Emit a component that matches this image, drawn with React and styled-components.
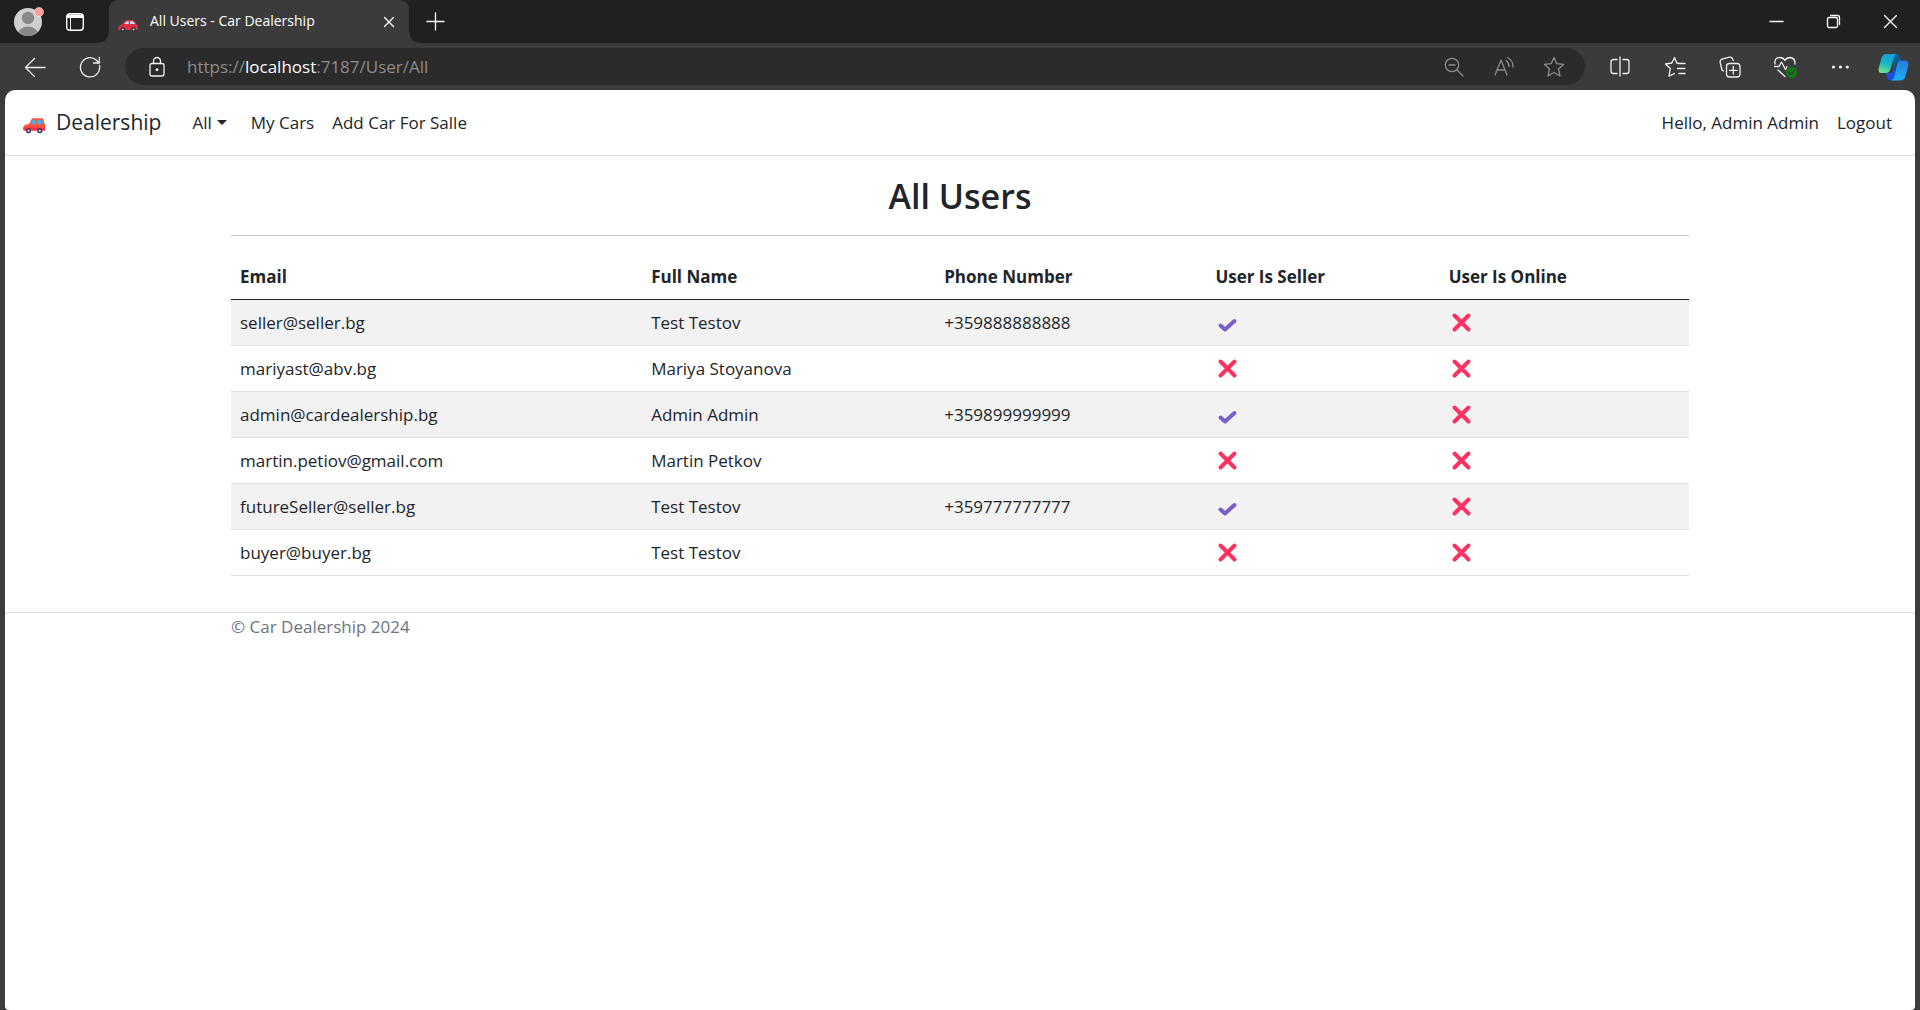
import React from "react";
import styled, { createGlobalStyle, css } from "styled-components";

const GlobalStyle = createGlobalStyle`
  *, *::before, *::after { box-sizing: border-box; }
  body {
    margin: 0;
    background: #3b3b3b;
    font-family: "Open Sans", "Noto Sans", sans-serif;
    font-size: 17px;
    line-height: 27px;
    color: #212529;
  }
  button { font: inherit; color: inherit; background: none; border: 0; padding: 0; }
  a { color: inherit; text-decoration: none; }
`;

/* ---------- Browser frame ---------- */

const Window = styled.div`
  display: flex;
  flex-direction: column;
  min-height: 100vh;
`;

const TitleBar = styled.header`
  display: flex;
  align-items: center;
  height: 43px;
  padding-left: 14px;
  background: #202020;
  color: #fff;
`;

const FrameButton = styled.button`
  display: flex;
  align-items: center;
  justify-content: center;
  flex: none;
  width: ${(p) => p.$width}px;
  height: 100%;
`;

const Tab = styled.div`
  position: relative;
  display: flex;
  align-items: center;
  gap: 12px;
  width: 300px;
  height: 100%;
  padding: 0 8px 0 9px;
  margin-left: 4px;
  border-radius: 9px 9px 0 0;
  background: #3b3b3b;

  &::before,
  &::after {
    content: "";
    position: absolute;
    bottom: 0;
    width: 10px;
    height: 10px;
  }
  &::before {
    right: 100%;
    background: radial-gradient(circle at 0 0, #202020 9px, #3b3b3b 10px);
  }
  &::after {
    left: 100%;
    background: radial-gradient(circle at 100% 0, #202020 9px, #3b3b3b 10px);
  }
`;

const TabTitle = styled.span`
  flex: 1;
  padding-bottom: 2px;
  font-size: 14px;
  line-height: 20px;
  white-space: nowrap;
`;

const WindowControls = styled.div`
  display: flex;
  height: 100%;
  margin-left: auto;
  padding-right: 1px;
`;

const Toolbar = styled.div`
  display: flex;
  align-items: center;
  gap: 1px;
  padding: 5px 0 5px 8px;
  color: #f0f0f0;
`;

const ToolGroup = styled.div`
  display: flex;
  align-items: center;
  height: 37px;
`;

const AddressBar = styled.div`
  display: flex;
  align-items: center;
  flex: 1;
  height: 37px;
  margin: 0 6px 0 7px;
  padding: 0 6px 0 12px;
  border-radius: 19px;
  background: #2b2b2b;
  color: #8c8c8c;
`;

const Url = styled.div`
  flex: 1;
  padding-left: 10px;
  font-size: 17px;
  line-height: 24px;
  white-space: nowrap;
  outline: none;
`;

const Host = styled.span`
  color: #fff;
`;

/* ---------- Site ---------- */

const Page = styled.div`
  flex: 1;
  margin: 0 5px;
  border-radius: 10px 10px 4px 4px;
  background: #fff;
`;

const Navbar = styled.nav`
  display: flex;
  align-items: center;
  height: 66px;
  padding: 0 23px 0 18px;
  border-bottom: 1px solid #dee2e6;
`;

const Brand = styled.a`
  display: flex;
  align-items: center;
  gap: 11px;
  margin-right: 31px;
  font-size: 21px;
`;

const NavList = styled.ul`
  display: flex;
  gap: ${(p) => p.$gap}px;
  margin: 0;
  padding: 0;
  list-style: none;
  ${(p) => p.$end && css`margin-left: auto;`}
`;

const NavItem = styled.li`
  white-space: nowrap;
`;

const Dropdown = styled.button`
  display: flex;
  align-items: center;
  gap: 5px;
  margin-right: 6px;

  &::after {
    content: "";
    border: 5px solid transparent;
    border-top-color: currentColor;
    border-bottom: 0;
  }
`;

const Container = styled.div`
  width: 100%;
  max-width: 1482px;
  margin: 0 auto;
  padding: 0 12px;
`;

const Heading = styled.h1`
  margin: 0;
  padding: 19px 0 17px;
  font-size: 34px;
  line-height: 43px;
  font-weight: 600;
  text-align: center;
`;

const Rule = styled.hr`
  height: 1px;
  margin: 0 0 18px;
  border: 0;
  background: #c7c8c9;
`;

const Table = styled.table`
  width: 100%;
  border-collapse: collapse;
  table-layout: fixed;
  margin-bottom: 36px;
`;

const Column = styled.col`
  width: ${(p) => p.$share}%;
`;

const HeadCell = styled.th`
  height: 45px;
  padding: 0 9px;
  text-align: left;
  font-weight: 700;
  border-bottom: 1px solid #212529;
`;

const Row = styled.tr`
  &:nth-child(odd) { background: #f2f2f2; }
`;

const Cell = styled.td`
  height: 46px;
  padding: 0 9px;
  border-bottom: 1px solid #dee2e6;
`;

const Footer = styled.footer`
  border-top: 1px solid #dee2e6;
  color: #6c757d;
`;

const StatusSvg = styled.svg`
  display: block;
  fill: none;
  stroke: ${(p) => (p.$yes ? "#7b5fc9" : "#ff3162")};
  stroke-width: 4;
  stroke-linecap: round;
  stroke-linejoin: round;
`;

const LineSvg = styled.svg`
  display: block;
  flex: none;
  fill: none;
  stroke: currentColor;
  stroke-width: 1.3;
  stroke-linecap: round;
  stroke-linejoin: round;
`;

/* ---------- Icons ---------- */

const Line = ({ size = 22, children }) => (
  <LineSvg width={size} height={size} viewBox={`0 0 ${size} ${size}`} aria-hidden="true">
    {children}
  </LineSvg>
);

const STAR = "M11 1.6 L13.7 7.6 L20.5 8.4 L15.5 13 L17 20 L11 16.5 L5 20 L6.500 13 L1.5 8.400 L8.300 7.600 Z";

const Avatar = () => (
  <svg width="30" height="30" viewBox="0 0 30 30" aria-hidden="true">
    <clipPath id="face"><circle cx="14" cy="15" r="14" /></clipPath>
    <circle cx="14" cy="15" r="14" fill="#d2d0ce" />
    <g clipPath="url(#face)" fill="#8a8886">
      <circle cx="14" cy="11" r="6.200" />
      <ellipse cx="14" cy="27" rx="10" ry="7.500" />
    </g>
    <circle cx="25" cy="5" r="4.500" fill="#ff9f97" stroke="#fff" strokeOpacity="0.5" />
  </svg>
);

const RedCar = () => (
  <svg width="20" height="20" viewBox="0 -3 20 20" aria-hidden="true">
    <path d="M0.500 12.500 Q1 10 4 9.300 L7 5.800 Q8 5 10 5 H14 Q16 5 17 6.500 L18.500 9 Q20 10 20 12 V14 Q20 15 19 15 H1.500 Q0 15 0 14 Z" fill="#dd2e44" />
    <path d="M6 9 L8.200 6.700 Q8.700 6.200 10 6.200 H10.800 V9 Z M12 6.200 H14 Q15.300 6.200 16 7.300 L17 9 H12 Z" fill="#bbddf5" />
    <circle cx="4.800" cy="14.500" r="2.300" fill="#292f33" />
    <circle cx="15.600" cy="14.500" r="2.300" fill="#292f33" />
    <circle cx="4.800" cy="14.500" r="1" fill="#ccd6dd" />
    <circle cx="15.600" cy="14.500" r="1" fill="#ccd6dd" />
  </svg>
);

const OrangeCar = () => (
  <svg width="22" height="22" viewBox="0 -3 22 22" aria-hidden="true">
    <path d="M6.500 8.500 L8.500 4.200 Q9 3.300 10 3.300 H19 Q20 3.300 20.300 4.200 L22 9.500 V15.500 H1 Q0 14.500 0.300 12 Q0.700 10.300 3 9.800 Z" fill="#ff5044" />
    <path d="M7.500 9.300 L9.700 4.800 H12.700 V9.300 Z M14.200 4.800 H18 V9.300 H14.200 Z M19.200 5 L20.700 9.300 H19.200 Z" fill="#3fb5e8" />
    <path d="M0.300 12.500 H22 V15.500 H1 Q0 15 0.300 12.500 Z" fill="#f83038" />
    <circle cx="5.500" cy="15.700" r="2.600" fill="#533566" />
    <circle cx="16.800" cy="15.700" r="2.600" fill="#533566" />
    <circle cx="5.500" cy="15.700" r="1" fill="#f6f0f5" />
    <circle cx="16.800" cy="15.700" r="1" fill="#f6f0f5" />
  </svg>
);

const Copilot = () => (
  <svg width="31" height="28" viewBox="0 0 31 28" aria-hidden="true">
    <defs>
      <linearGradient id="cpA" x1="0.600" y1="0" x2="0.300" y2="1">
        <stop offset="0" stopColor="#0f9fe0" />
        <stop offset="0.500" stopColor="#16b5c4" />
        <stop offset="1" stopColor="#6fe08c" />
      </linearGradient>
      <linearGradient id="cpB" x1="0.700" y1="0" x2="0.300" y2="1">
        <stop offset="0" stopColor="#2a78dc" />
        <stop offset="1" stopColor="#18b4fb" />
      </linearGradient>
    </defs>
    <path d="M13 1 H18 Q21 1 22 4 L23 7.500 Q20 7 18.500 10 L16 17 Z" fill="#075f93" />
    <path d="M8 20 H14 L17 13 L18 27.500 H13 Q10 27.500 9 24 Z" fill="#1b4fe0" />
    <path d="M8.500 1 H19 Q16.500 2 15.500 5.500 L12.500 16 Q11.300 20 8 20 H3.500 Q0 20 0.600 15.500 L3.500 5 Q4.800 1 8.500 1 Z" fill="url(#cpA)" />
    <path d="M22.500 7.500 H27 Q31 7.500 30.400 12 L27.500 23 Q26.300 27.500 22.500 27.500 H13.500 Q15.800 26.500 16.700 23 L19 11.500 Q20 7.500 22.500 7.500 Z" fill="url(#cpB)" />
  </svg>
);

const Status = ({ yes }) => (
  <StatusSvg $yes={yes} width="24" height="24" viewBox="0 0 24 24" role="img" aria-label={yes ? "Yes" : "No"}>
    {yes ? <path d="M5.500 15.500 L10 19.500 L19.500 11" /> : <path d="M5.500 5.500 L19.500 19.500 M19.500 5.500 L5.500 19.500" />}
  </StatusSvg>
);

/* ---------- Data ---------- */

const columns = [
  { label: "Email", share: 28.2 },
  { label: "Full Name", share: 20.1 },
  { label: "Phone Number", share: 18.6 },
  { label: "User Is Seller", share: 16 },
  { label: "User Is Online", share: 17.1 },
];

const users = [
  { email: "seller@seller.bg", name: "Test Testov", phone: "+359888888888", seller: true },
  { email: "mariyast@abv.bg", name: "Mariya Stoyanova", phone: "", seller: false },
  { email: "admin@cardealership.bg", name: "Admin Admin", phone: "+359899999999", seller: true },
  { email: "martin.petiov@gmail.com", name: "Martin Petkov", phone: "", seller: false },
  { email: "futureSeller@seller.bg", name: "Test Testov", phone: "+359777777777", seller: true },
  { email: "buyer@buyer.bg", name: "Test Testov", phone: "", seller: false },
];

/* ---------- Sections ---------- */

const BrowserTabs = () => (
  <TitleBar>
    <FrameButton $width={30} aria-label="Profile"><Avatar /></FrameButton>
    <FrameButton $width={61} aria-label="Tab actions">
      <svg width="18" height="18" viewBox="0 0 18 18" fill="none" stroke="#fff" aria-hidden="true">
        <rect x="0.700" y="0.700" width="16.600" height="16.600" rx="3" strokeWidth="1.400" />
        <path d="M1 1.500 H17 V5 H1 Z" fill="#fff" stroke="none" />
        <path d="M4.500 4 V17" />
      </svg>
    </FrameButton>
    <Tab>
      <RedCar />
      <TabTitle>All Users - Car Dealership</TabTitle>
      <FrameButton $width={24} aria-label="Close tab">
        <Line size={12}><path d="M1.500 1.500 L10.500 10.500 M10.500 1.500 L1.500 10.500" /></Line>
      </FrameButton>
    </Tab>
    <FrameButton $width={52} aria-label="New tab">
      <Line size={19}><path d="M9.500 1 V18 M1 9.500 H18" /></Line>
    </FrameButton>
    <WindowControls>
      <FrameButton $width={57} aria-label="Minimize">
        <Line size={15}><path d="M1 7.500 H14" /></Line>
      </FrameButton>
      <FrameButton $width={57} aria-label="Restore">
        <Line size={15}>
          <rect x="1.500" y="3.500" width="10" height="10" rx="1.500" />
          <path d="M4.500 1.500 H11.500 Q13.500 1.500 13.500 3.500 V10.500" />
        </Line>
      </FrameButton>
      <FrameButton $width={57} aria-label="Close">
        <Line size={15}><path d="M1.500 1.500 L13.500 13.500 M13.500 1.500 L1.500 13.500" /></Line>
      </FrameButton>
    </WindowControls>
  </TitleBar>
);

const BrowserToolbar = () => (
  <Toolbar>
    <FrameButton $width={54} aria-label="Back">
      <Line><path d="M21 11.500 H1.500 M10.500 2.500 L1.500 11.500 L10.500 20.500" /></Line>
    </FrameButton>
    <FrameButton $width={54} aria-label="Refresh">
      <Line>
        <path d="M20.500 9.500 A9.600 9.600 0 1 1 17.500 4.200 L19.500 6.500 M20.300 1.500 V7 H14.500" />
      </Line>
    </FrameButton>
    <AddressBar>
      <FrameButton $width={40} aria-label="Site information">
        <Line>
          <g stroke="#f0f0f0">
            <rect x="4" y="7.500" width="14" height="12.500" rx="2" />
            <path d="M7.500 7.500 V5 A3.500 3.500 0 0 1 14.500 5 V7.500" />
            <circle cx="11" cy="13.700" r="0.800" fill="#f0f0f0" />
          </g>
        </Line>
      </FrameButton>
      <Url role="textbox" aria-label="Address" contentEditable suppressContentEditableWarning spellCheck={false}>
        https://<Host>localhost</Host>:7187/User/All
      </Url>
      <FrameButton $width={50} aria-label="Zoom out">
        <Line><circle cx="9" cy="9" r="6.700" /><path d="M14 14 L20 20 M6 9 H12" /></Line>
      </FrameButton>
      <FrameButton $width={50} aria-label="Read aloud">
        <Line>
          <path d="M2 19 L8 4 L14 19 M4 14 H12 M13 4.500 Q16 6.500 16 10.500 M14.500 1.500 Q20.500 5 20 11" />
        </Line>
      </FrameButton>
      <FrameButton $width={50} aria-label="Add to favorites">
        <Line><path d={STAR} /></Line>
      </FrameButton>
    </AddressBar>
    <ToolGroup>
      <FrameButton $width={55} aria-label="Split screen">
        <Line>
          <path d="M8 3.500 H4.500 Q2 3.500 2 6 V15 Q2 17.500 4.500 17.500 H8 M14 3.500 H17.500 Q20 3.500 20 6 V15 Q20 17.500 17.500 17.500 H14 M11 1 V20" />
        </Line>
      </FrameButton>
      <FrameButton $width={55} aria-label="Favorites">
        <Line>
          <path d="M15 7.500 L12.800 7 L10.500 1.500 L7.800 7 L1.500 8 L6.300 12.500 L5 20.200 L10.500 17.500 M14 7.500 H21 M13.500 12.500 H21 M15 17.500 H21" />
        </Line>
      </FrameButton>
      <FrameButton $width={55} aria-label="Collections">
        <Line>
          <rect x="7.500" y="7.500" width="13.500" height="13.500" rx="3" />
          <path d="M14.300 10.500 V18 M10.500 14.300 H18 M4.500 15 Q3 14.500 2.600 12.500 L1.200 6.500 Q0.700 4 3 3.200 L10.500 1.200 Q13.500 0.700 14.200 4.500" />
        </Line>
      </FrameButton>
      <FrameButton $width={55} aria-label="Browser essentials">
        <Line size={24}>
          <path d="M2 9 Q1 2.500 7 2.500 Q10 2.500 12 5.500 Q14 2.500 17 2.500 Q22.500 3 22 9 M1.500 11.500 H6 L8.500 7 L12.500 14.500 L14 11.500 M5 15 L12 21.500" />
          <circle cx="18.500" cy="17.500" r="5.500" fill="#107c10" stroke="none" />
          <path d="M16 17.500 L18 19.500 L21.200 15.800" stroke="#3b3b3b" />
        </Line>
      </FrameButton>
      <FrameButton $width={55} aria-label="Settings and more">
        <Line size={18}>
          <g fill="currentColor" stroke="none">
            <circle cx="2.500" cy="9" r="1.600" /><circle cx="9.500" cy="9" r="1.600" /><circle cx="16.300" cy="9" r="1.600" />
          </g>
        </Line>
      </FrameButton>
      <FrameButton $width={53} aria-label="Copilot"><Copilot /></FrameButton>
    </ToolGroup>
  </Toolbar>
);

const SiteNav = () => (
  <Navbar>
    <Brand href="#home"><OrangeCar />Dealership</Brand>
    <NavList $gap={18}>
      <NavItem><Dropdown aria-haspopup="menu">All</Dropdown></NavItem>
      <NavItem><a href="#my-cars">My Cars</a></NavItem>
      <NavItem><a href="#add-car">Add Car For Salle</a></NavItem>
    </NavList>
    <NavList $gap={18} $end>
      <NavItem><a href="#account">Hello, Admin Admin</a></NavItem>
      <NavItem><button type="submit">Logout</button></NavItem>
    </NavList>
  </Navbar>
);

const UsersTable = () => (
  <Table>
    <colgroup>
      {columns.map((c) => <Column key={c.label} $share={c.share} />)}
    </colgroup>
    <thead>
      <tr>{columns.map((c) => <HeadCell key={c.label} scope="col">{c.label}</HeadCell>)}</tr>
    </thead>
    <tbody>
      {users.map((u) => (
        <Row key={u.email}>
          <Cell>{u.email}</Cell>
          <Cell>{u.name}</Cell>
          <Cell>{u.phone}</Cell>
          <Cell><Status yes={u.seller} /></Cell>
          <Cell><Status yes={false} /></Cell>
        </Row>
      ))}
    </tbody>
  </Table>
);

export default function App() {
  return (
    <>
      <GlobalStyle />
      <Window>
        <BrowserTabs />
        <BrowserToolbar />
        <Page>
          <SiteNav />
          <Container as="main">
            <Heading>All Users</Heading>
            <Rule />
            <UsersTable />
          </Container>
          <Footer>
            <Container>© Car Dealership 2024</Container>
          </Footer>
        </Page>
      </Window>
    </>
  );
}
